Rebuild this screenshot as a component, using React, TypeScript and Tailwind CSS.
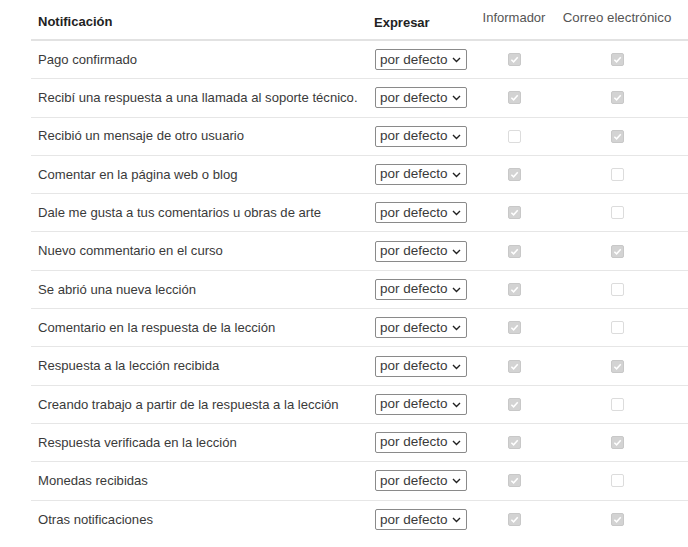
import React from 'react';

const rows: [string, boolean, boolean][] = [
  ['Pago confirmado', true, true],
  ['Recibí una respuesta a una llamada al soporte técnico.', true, true],
  ['Recibió un mensaje de otro usuario', false, true],
  ['Comentar en la página web o blog', true, false],
  ['Dale me gusta a tus comentarios u obras de arte', true, false],
  ['Nuevo commentario en el curso', true, true],
  ['Se abrió una nueva lección', true, false],
  ['Comentario en la respuesta de la lección', true, false],
  ['Respuesta a la lección recibida', true, true],
  ['Creando trabajo a partir de la respuesta a la lección', true, false],
  ['Respuesta verificada en la lección', true, true],
  ['Monedas recibidas', true, false],
  ['Otras notificaciones', true, true],
];

function Check({ on }: { on: boolean }) {
  if (on) {
    return (
      <span className="w-[13px] h-[13px] rounded-[2px] bg-[#d3d3d3] border border-[#c8c8c8] flex items-center justify-center">
        <svg width="9" height="9" viewBox="0 0 10 10">
          <path d="M1.5 5.2 L4 7.6 L8.6 2.4" fill="none" stroke="#fff" strokeWidth="1.7" />
        </svg>
      </span>
    );
  }
  return <span className="w-[13px] h-[13px] rounded-[2px] bg-white border border-[#dcdcdc]" />;
}

function Select() {
  return (
    <div className="relative w-[92px] h-[21px] border border-[#8a8a8a] rounded-[2px] bg-white flex items-center pl-[4px] text-[13.5px] text-[#3a3a3a]">
      por defecto
      <svg className="absolute right-[5px] top-[7px]" width="9" height="6" viewBox="0 0 9 6">
        <path d="M1 1 L4.5 4.5 L8 1" fill="none" stroke="#222" strokeWidth="1.4" />
      </svg>
    </div>
  );
}

export default function App() {
  return (
    <div className="w-[688px] h-[547px] bg-white pl-[31px] text-[#3a3a3a]" style={{ fontFamily: '"Liberation Sans", Arial, sans-serif' }}>
      {/* header */}
      <div className="flex h-[41px] border-b-2 border-[#e2e2e2]">
        <div className="w-[335px] pl-[7px] pt-[12px] text-[13px] font-bold text-[#222]">Notificación</div>
        <div className="w-[108px] pl-[8px] pt-[13px] text-[13px] font-bold text-[#222]">Expresar</div>
        <div className="w-[80px] flex justify-center pt-[8px] text-[13px] text-[#555]">Informador</div>
        <div className="w-[126px] flex justify-center pt-[8px] text-[13.3px] text-[#555]">Correo electrónico</div>
      </div>

      {rows.map(([label, inf, mail], i) => (
        <div key={i} className={`flex items-center h-[38.3px] ${i < rows.length - 1 ? 'border-b border-[#e6e6e6]' : ''}`}>
          <div className="w-[335px] pl-[7px] text-[13.1px]">{label}</div>
          <div className="w-[108px] pl-[9px]"><Select /></div>
          <div className="w-[80px] flex justify-center"><Check on={inf} /></div>
          <div className="w-[126px] flex justify-center"><Check on={mail} /></div>
        </div>
      ))}
    </div>
  );
}
